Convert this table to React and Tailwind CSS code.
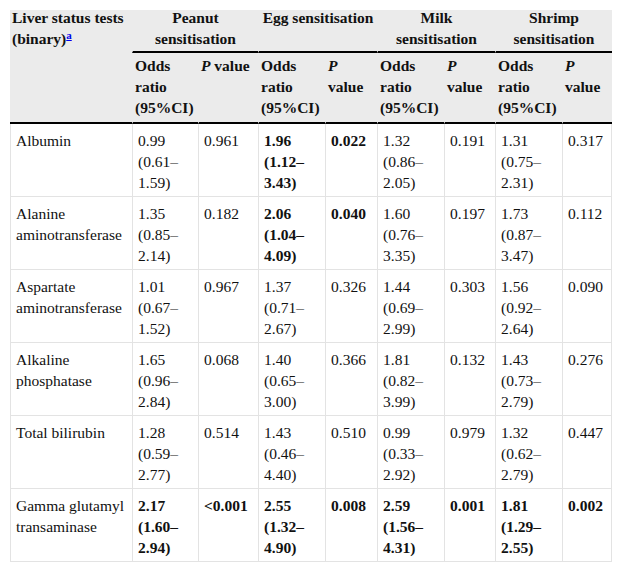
import React from "react";

const rows = [
  { name: "Albumin", cells: [["0.99 (0.61–1.59)", false], ["0.961", false], ["1.96 (1.12–3.43)", true], ["0.022", true], ["1.32 (0.86–2.05)", false], ["0.191", false], ["1.31 (0.75–2.31)", false], ["0.317", false]] },
  { name: "Alanine aminotransferase", cells: [["1.35 (0.85–2.14)", false], ["0.182", false], ["2.06 (1.04–4.09)", true], ["0.040", true], ["1.60 (0.76–3.35)", false], ["0.197", false], ["1.73 (0.87–3.47)", false], ["0.112", false]] },
  { name: "Aspartate aminotransferase", cells: [["1.01 (0.67–1.52)", false], ["0.967", false], ["1.37 (0.71–2.67)", false], ["0.326", false], ["1.44 (0.69–2.99)", false], ["0.303", false], ["1.56 (0.92–2.64)", false], ["0.090", false]] },
  { name: "Alkaline phosphatase", cells: [["1.65 (0.96–2.84)", false], ["0.068", false], ["1.40 (0.65–3.00)", false], ["0.366", false], ["1.81 (0.82–3.99)", false], ["0.132", false], ["1.43 (0.73–2.79)", false], ["0.276", false]] },
  { name: "Total bilirubin", cells: [["1.28 (0.59–2.77)", false], ["0.514", false], ["1.43 (0.46–4.40)", false], ["0.510", false], ["0.99 (0.33–2.92)", false], ["0.979", false], ["1.32 (0.62–2.79)", false], ["0.447", false]] },
  { name: "Gamma glutamyl transaminase", cells: [["2.17 (1.60–2.94)", true], ["<0.001", true], ["2.55 (1.32–4.90)", true], ["0.008", true], ["2.59 (1.56–4.31)", true], ["0.001", true], ["1.81 (1.29–2.55)", true], ["0.002", true]] },
];

const groups = ["Peanut sensitisation", "Egg sensitisation", "Milk sensitisation", "Shrimp sensitisation"];

export default function App() {
  return (
    <div className="bg-white w-[623px] h-[572px] pt-[10px] pl-[10px] font-['Liberation_Serif','Times_New_Roman',serif]">
      <table className="table-fixed border-separate border-spacing-0 w-[602px] text-[15.5px] leading-[21px] text-[#111] font-['Liberation_Serif','Times_New_Roman',serif]">
        <colgroup>
          <col className="w-[122px]" />
          <col className="w-[66px]" />
          <col className="w-[60px]" />
          <col className="w-[67px]" />
          <col className="w-[52px]" />
          <col className="w-[67px]" />
          <col className="w-[51px]" />
          <col className="w-[67px]" />
          <col className="w-[50px]" />
        </colgroup>
        <thead className="bg-[#ebebeb]">
          <tr>
            <th rowSpan={2} className="align-top text-left font-bold px-[2px] pt-0 border-b-2 border-b-black">
              <div className="-mt-[3px]">
                Liver status tests (binary)
                <sup className="text-[#0000ee] underline text-[11px] leading-none">a</sup>
              </div>
            </th>
            {groups.map((t) => (
              <th key={t} colSpan={2} className="align-top text-center font-bold px-[2px] pt-0 pb-[2px] border-l border-l-[#ebebeb] border-b-2 border-b-black">
                <div className="-mt-[3px]">{t}</div>
              </th>
            ))}
          </tr>
          <tr>
            {groups.flatMap((g, i) => [
              <th key={"o" + i} className="align-top text-left font-bold px-[2px] pt-[2px] pb-[4px] border-l border-l-[#ebebeb] border-b-2 border-b-black">
                Odds ratio (95%CI)
              </th>,
              <th key={"p" + i} className="align-top text-left font-bold px-[2px] pt-[2px] pb-[4px] border-l border-l-[#ebebeb] border-b-2 border-b-black">
                <i>P</i> value
              </th>,
            ])}
          </tr>
        </thead>
        <tbody>
          {rows.map((r) => (
            <tr key={r.name}>
              <td className="align-top pl-[5px] pr-[2px] pt-[6px] pb-[3px] border-l border-b border-[#e3e3e3] font-['Liberation_Serif',serif]">
                {r.name}
              </td>
              {r.cells.map(([v, b], i) => (
                <td
                  key={i}
                  className={
                    "align-top pl-[5px] pr-[2px] pt-[6px] pb-[3px] border-l border-b border-[#e3e3e3] last:border-r font-['Liberation_Serif',serif] " +
                    (b ? "font-bold" : "font-normal")
                  }
                >
                  {v}
                </td>
              ))}
            </tr>
          ))}
        </tbody>
      </table>
    </div>
  );
}
